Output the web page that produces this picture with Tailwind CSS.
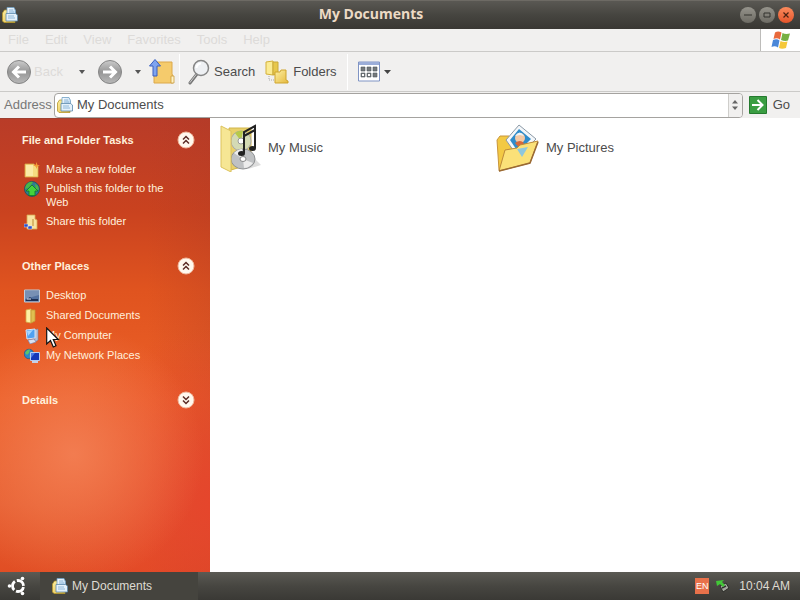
<!DOCTYPE html>
<html lang="en">
<head>
    <meta charset="UTF-8">
    <meta name="viewport" content="width=device-width, initial-scale=1.0">
    <title>My Documents</title>
    <script src="https://cdn.jsdelivr.net/npm/@tailwindcss/browser@4"></script>
</head>
<body class="flex flex-col h-screen overflow-hidden bg-white text-[#4c4c4c] text-[13px] leading-4 font-['Liberation_Sans',Arial,sans-serif]">

    <!-- Shared icons -->
    <svg class="absolute size-0" aria-hidden="true">
        <defs>
            <linearGradient id="grey" x1="0" y1="0" x2="0" y2="1"><stop offset="0" stop-color="#cbcbcb"/><stop offset=".5" stop-color="#979797"/><stop offset="1" stop-color="#b8b8b8"/></linearGradient>
            <linearGradient id="gold" x1="0" y1="0" x2="1" y2="1"><stop offset="0" stop-color="#fdf0a4"/><stop offset="1" stop-color="#e5b93e"/></linearGradient>
            <linearGradient id="page" x1="0" y1="0" x2="1" y2="1"><stop offset="0" stop-color="#ffffff"/><stop offset="1" stop-color="#a9cdec"/></linearGradient>
        </defs>
        <symbol id="docs" viewBox="0 0 16 16">
            <path d="M.500 6l2-3H6v10l7 1v1.500H2L.500 14z" fill="url(#gold)" stroke="#b8992c" stroke-width=".8"/>
            <path d="M5 .500h7l1.500 3V10H5z" fill="url(#page)" stroke="#6f9fc4" stroke-width=".8"/>
            <path d="M4 6.500h9.500l2 1.500v6H4z" fill="#e4f1fb" stroke="#5b88ab" stroke-width=".8"/>
            <path d="M7 3h4M7 5h5M6 9h6M6 11h7" stroke="#78abd2" stroke-width=".8"/>
        </symbol>
        <symbol id="chevrons" viewBox="0 0 18 18">
            <circle cx="9" cy="9" r="8" fill="#fff8ee" stroke="#f0b69a"/>
            <path d="M6 8.500l3-3 3 3M6 12.500l3-3 3 3" fill="none" stroke="#5a2a24" stroke-width="1.500"/>
        </symbol>
    </svg>

    <!-- Title bar -->
    <header class="flex shrink-0 items-center h-[29px] px-0.5 bg-linear-to-b from-[#5a5853] via-[#464540] to-[#393733] border-t border-[#6d6a64]">
        <svg class="size-4"><use href="#docs"/></svg>
        <h1 class="flex-1 pr-4 pb-0.5 text-center text-sm font-bold text-[#ecdac5] font-['Open_Sans',sans-serif]">My Documents</h1>
        <div class="flex gap-[3px] pr-1">
            <button type="button" aria-label="Minimize" class="size-4 rounded-full bg-linear-to-b from-[#96948c] to-[#6d6b64]">
                <svg viewBox="0 0 16 16"><path d="M4 8h8" stroke="#33322e"/></svg>
            </button>
            <button type="button" aria-label="Maximize" class="size-4 rounded-full bg-linear-to-b from-[#96948c] to-[#6d6b64]">
                <svg viewBox="0 0 16 16"><path d="M5 6h6v4H5z" fill="none" stroke="#33322e"/></svg>
            </button>
            <button type="button" aria-label="Close" class="size-4 rounded-full bg-linear-to-b from-[#fa8a5c] to-[#e5542a]">
                <svg viewBox="0 0 16 16"><path d="M5.500 5.500l5 5m0-5l-5 5" stroke="#4a2212" stroke-width="1.200"/></svg>
            </button>
        </div>
    </header>

    <!-- Menu bar -->
    <nav class="flex shrink-0 h-[23px] bg-[#f1f0ef] border-b border-[#cbcac8] text-[#dddbd9]">
        <div class="flex flex-1 items-center gap-4 pl-2">
            <button type="button">File</button>
            <button type="button">Edit</button>
            <button type="button">View</button>
            <button type="button">Favorites</button>
            <button type="button">Tools</button>
            <button type="button">Help</button>
        </div>
        <div class="flex w-10 items-center justify-center bg-white border-l border-[#bdbcba]">
            <svg class="w-5 h-[18px]" viewBox="0 0 20 18">
                <path d="M4 1.500q3-2 6.500 0L9 8.500q-3-2-6.500-.5z" fill="#e8693c"/>
                <path d="M11.500 2q3 1.500 7.500.5l-2 7q-3 1-7-.5z" fill="#76b043"/>
                <path d="M2 9q4-1.500 6.500.5L7 16.500q-3-2-6.500-.5z" fill="#4a87d8"/>
                <path d="M9.500 10q3.500 1.500 7 .5l-1.500 6.500q-4 1.500-7 0z" fill="#f5c83a"/>
            </svg>
        </div>
    </nav>

    <!-- Toolbar -->
    <div class="flex shrink-0 items-center h-10 px-1.5 bg-[#f1f0ef] border-b border-[#cbcac8]">
        <button type="button" class="flex items-center gap-0.5 w-[70px] text-[#dddbd9]">
            <svg class="size-[26px] shrink-0" viewBox="0 0 26 26">
                <circle cx="13" cy="13" r="11.500" fill="url(#grey)" stroke="#858585"/>
                <path d="M20 13H8m5-5.500L7.500 13l5.500 5.500" fill="none" stroke="#fff" stroke-width="3"/>
            </svg>
            Back
        </button>
        <button type="button" aria-label="Back history" class="w-[21px]"><svg class="h-1 w-1.5 ml-[3px]" viewBox="0 0 6 4"><path d="M0 0h6L3 4z" fill="#555"/></svg></button>
        <button type="button" aria-label="Forward">
            <svg class="size-[26px]" viewBox="0 0 26 26">
                <circle cx="13" cy="13" r="11.500" fill="url(#grey)" stroke="#858585"/>
                <path d="M6 13h12m-5-5.500l5.500 5.500-5.500 5.500" fill="none" stroke="#fff" stroke-width="3"/>
            </svg>
        </button>
        <button type="button" aria-label="Forward history" class="w-6"><svg class="h-1 w-1.5 ml-3" viewBox="0 0 6 4"><path d="M0 0h6L3 4z" fill="#555"/></svg></button>
        <button type="button" aria-label="Up">
            <svg class="h-[26px] w-7" viewBox="0 0 28 26">
                <path d="M7 3h18v12l1 2v7H7z" fill="#f5cb6c" stroke="#dca84a"/>
                <path d="M24 17h3v7h-3z" fill="#fff3c4" stroke="#c99a3c" stroke-width=".8"/>
                <path d="M8 .500L13.500 7H10v10H6V7H2.500z" fill="#7fa4f0" stroke="#3a5fc0"/>
            </svg>
        </button>
        <div class="h-9 w-px ml-1 mr-2 bg-[#dcdbd9] border-r border-white"></div>
        <button type="button" class="flex items-center gap-1">
            <svg class="h-[26px] w-[22px]" viewBox="0 0 22 26">
                <path d="M9 15L2 24" stroke="#777" stroke-width="3" stroke-linecap="round"/>
                <path d="M8.500 15L2 23.500" stroke="#ccc" stroke-linecap="round"/>
                <circle cx="13" cy="9" r="7.500" fill="#eef0f3" stroke="#858585" stroke-width="1.500"/>
                <path d="M8.500 9a4.500 4.500 0 0 1 4.500-4.500" fill="none" stroke="#fff" stroke-width="2"/>
            </svg>
            Search
        </button>
        <button type="button" class="flex items-center gap-1 ml-2.5">
            <svg class="size-6" viewBox="0 0 24 24">
                <path d="M1 2l7-1v14l-7-1z" fill="#fbeb94" stroke="#d4b13a"/>
                <path d="M8 2h5v12l-5 1z" fill="#e7c74c" stroke="#c9a83a"/>
                <path d="M4 16v4h5" fill="none" stroke="#aaa" stroke-dasharray="1 1"/>
                <path d="M10 12h5l1-2h5v10l2 1v2H10z" fill="url(#gold)" stroke="#cfa52f"/>
            </svg>
            Folders
        </button>
        <div class="h-9 w-px mx-2.5 bg-[#dcdbd9] border-r border-white"></div>
        <button type="button" aria-label="Views" class="flex items-center gap-1">
            <svg class="h-[21px] w-[22px]" viewBox="0 0 22 21">
                <path d="M.500 1h21v19H.500z" fill="#fff" stroke="#8094c4"/>
                <path d="M1 1h20v3H1z" fill="#9badd8"/>
                <path d="M3 6h4v4H3zM9 6h4v4H9zM15 6h4v4h-4zM3 12h4v4H3zM9 12h4v4H9zM15 12h4v4h-4z" fill="#75797c" stroke="#4e5860" stroke-width=".6"/>
                <path d="M4 13h2v2H4zM10 13h2v2h-2z" fill="#fff"/>
            </svg>
            <svg class="h-1 w-[7px]" viewBox="0 0 7 4"><path d="M0 0h7L3.500 4z" fill="#444"/></svg>
        </button>
    </div>

    <!-- Address bar -->
    <div class="flex shrink-0 items-center h-[26px] pl-1 bg-[#f1f0ef]">
        <label for="address" class="w-[50px] text-[#777]">Address</label>
        <div class="flex flex-1 h-[25px] items-center bg-white border border-[#a5a3a0] rounded-sm overflow-hidden">
            <svg class="size-4 ml-0.5 shrink-0"><use href="#docs"/></svg>
            <input id="address" type="text" value="My Documents" class="flex-1 min-w-0 pl-1 outline-none">
            <button type="button" aria-label="Show addresses" class="flex h-full w-3.5 items-center justify-center bg-[#f1f0ef] border-l border-[#cfcecb]">
                <svg class="h-2.5 w-1.5" viewBox="0 0 6 10"><path d="M0 3.500h6L3 0zM0 6.500h6L3 10z" fill="#666"/></svg>
            </button>
        </div>
        <button type="button" class="flex items-center gap-1.5 pl-1.5 pr-2.5">
            <svg class="size-[18px]" viewBox="0 0 18 18">
                <path d="M.500.500h17v17H.500z" fill="#3a9d42" stroke="#257a2e"/>
                <path d="M3 9h10M8.500 4l5 5-5 5" fill="none" stroke="#fff" stroke-width="2"/>
            </svg>
            Go
        </button>
    </div>

    <div class="flex flex-1 min-h-0">
        <!-- Task pane -->
        <aside class="relative w-[210px] shrink-0 pt-[11px] pl-[22px] pr-[15px] text-[11px] leading-3.5 text-[#fff0dc] border-t border-[#9e3f30] bg-[radial-gradient(circle_at_35%_74%,#f27c50_0%,#f27c5000_36%),radial-gradient(circle_at_105%_85%,#e6452c_0%,#e6452c00_40%),linear-gradient(to_left,#a8382838_0%,#a8382800_30%),linear-gradient(to_bottom,#b93c28_0%,#c9421f_20%,#e0541f_38%,#ec6028_62%,#e55c2e_85%,#e14e24_100%)]">
            <section>
                <div class="flex items-center justify-between h-5">
                    <h2 class="font-bold">File and Folder Tasks</h2>
                    <button type="button" aria-label="Collapse File and Folder Tasks"><svg class="size-[18px]"><use href="#chevrons"/></svg></button>
                </div>
                <ul class="flex flex-col gap-[5px] mt-3 pl-0.5">
                    <li><a href="#" class="flex h-3.5 gap-1.5">
                        <svg class="size-4 shrink-0" viewBox="0 0 16 16">
                            <path d="M1 2h9l1 2h3v11H1z" fill="#f6dc80" stroke="#d9a848" stroke-width=".8"/>
                            <path d="M2 3h7v11H2z" fill="#fbeaa6"/>
                            <path d="M12.500 0l.8 2.700L16 3.500l-2.700.8-.8 2.700-.8-2.700L9 3.500l2.700-.8z" fill="#f49b35"/>
                        </svg>
                        Make a new folder</a></li>
                    <li><a href="#" class="flex h-7 gap-1.5">
                        <svg class="size-4 shrink-0" viewBox="0 0 16 16">
                            <circle cx="8" cy="8" r="7.500" fill="#2f7d8f" stroke="#1f4e5c" stroke-width=".8"/>
                            <path d="M2 4q3-4 7-3l-2 3-3 3-3 1zM11 3l3 2 1 4-3-1z" fill="#48b848"/>
                            <path d="M8 4l6 6h-3v4.500H5V10H2z" fill="#45d23c" stroke="#137a1c" stroke-width=".8"/>
                        </svg>
                        <span class="w-[125px]">Publish this folder to the Web</span></a></li>
                    <li><a href="#" class="flex h-3.5 gap-1.5">
                        <svg class="size-4 shrink-0" viewBox="0 0 16 16">
                            <path d="M3 1h8v4l2 1v9H3z" fill="#f8e2a0" stroke="#d8a850" stroke-width=".8"/>
                            <path d="M9 5v7" stroke="#b98a34"/>
                            <path d="M0 10h4v3H0zM4 12h4v3H4z" fill="#2c4fc4" stroke="#dbe4ff" stroke-width=".5"/>
                        </svg>
                        Share this folder</a></li>
                </ul>
            </section>

            <section class="mt-7">
                <div class="flex items-center justify-between h-5">
                    <h2 class="font-bold">Other Places</h2>
                    <button type="button" aria-label="Collapse Other Places"><svg class="size-[18px]"><use href="#chevrons"/></svg></button>
                </div>
                <ul class="flex flex-col gap-1.5 mt-3 pl-0.5">
                    <li><a href="#" class="flex h-3.5 gap-1.5">
                        <svg class="size-4 shrink-0" viewBox="0 0 16 16">
                            <path d="M.500 2h15v12H.500z" fill="#53719f" stroke="#c3ccd8"/>
                            <path d="M1 3h14v4L1 11z" fill="#7890b4"/>
                            <path d="M2 12l4-3 2 2h6v2H2z" fill="#1c2f54"/>
                            <path d="M3 11h4" stroke="#e6eefa"/>
                        </svg>
                        Desktop</a></li>
                    <li><a href="#" class="flex h-3.5 gap-1.5">
                        <svg class="size-4 shrink-0" viewBox="0 0 16 16">
                            <path d="M2 2l5-1v14l-5-1z" fill="#fdf0a4" stroke="#d5ad48" stroke-width=".8"/>
                            <path d="M7 2h4v11l-4 2z" fill="#e0be50" stroke="#c49a35" stroke-width=".8"/>
                        </svg>
                        Shared Documents</a></li>
                    <li><a href="#" class="flex h-3.5 gap-1.5">
                        <svg class="size-4 shrink-0" viewBox="0 0 16 16">
                            <path d="M10 2l4-1v11l-3 2z" fill="#b9c3d8" stroke="#7784a4" stroke-width=".6"/>
                            <path d="M2 2l9-1v9l-8 1z" fill="#4fa1f2" stroke="#d6e5f8"/>
                            <path d="M3 3l6-1-5 6z" fill="#a4d5ff"/>
                            <path d="M4 12l6-1 2 3-6 2z" fill="#d9e2f1" stroke="#7184b5" stroke-width=".6"/>
                        </svg>
                        My Computer</a></li>
                    <li><a href="#" class="flex h-3.5 gap-1.5">
                        <svg class="size-4 shrink-0" viewBox="0 0 16 16">
                            <circle cx="5" cy="6" r="4.800" fill="#2c87c8" stroke="#174f80" stroke-width=".6"/>
                            <path d="M1 5q2-4 5-3.500L5 5 3 7zM5 8l3-2v4z" fill="#5cc46a"/>
                            <path d="M6.500 4.500h9v8h-9z" fill="#1637b8" stroke="#b8cdf2"/>
                            <path d="M7 5h4l-4 5z" fill="#4877e6"/>
                            <path d="M8 13h6v2H8z" fill="#c6d0e6"/>
                        </svg>
                        My Network Places</a></li>
                </ul>
            </section>

            <section class="mt-7">
                <div class="flex items-center justify-between h-5">
                    <h2 class="font-bold">Details</h2>
                    <button type="button" aria-label="Expand Details"><svg class="size-[18px] rotate-180"><use href="#chevrons"/></svg></button>
                </div>
            </section>

            <!-- Mouse pointer -->
            <svg class="absolute left-[46px] top-[208px] h-[22px] w-3.5" viewBox="0 0 14 22">
                <path d="M.700 1v16l3.800-3.500L7.300 20l2.700-1.200L7.300 12.500h5z" fill="#fff" stroke="#111" stroke-width="1.200"/>
            </svg>
        </aside>

        <!-- Folder contents -->
        <main class="grid flex-1 grid-cols-[278px_1fr] content-start items-center pl-2 pt-1.5 bg-white">
            <a href="#" class="flex items-center gap-1.5">
                <svg class="h-12 w-11" viewBox="0 0 44 48">
                    <path d="M30 45l13-4-6-6z" fill="#ddd"/>
                    <path d="M11 4h22v36l-20 6z" fill="#e9d16a" stroke="#d2b64a"/>
                    <circle cx="23" cy="17" r="10" fill="#d4dab4" stroke="#aaa"/>
                    <path d="M23 17l-6-8a10 10 0 0 1 8-2z" fill="#b6c94a"/>
                    <circle cx="23" cy="17" r="3" fill="#fff" stroke="#999"/>
                    <ellipse cx="25" cy="35" rx="12" ry="10" fill="#bfc1c3" stroke="#8f9193"/>
                    <path d="M25 35l-9-6q4-4 8-4zM25 35l10 4q-4 5-9 5z" fill="#ececec"/>
                    <ellipse cx="25" cy="35" rx="3" ry="2.500" fill="#fff" stroke="#888"/>
                    <path d="M3 2l10 5v41L3 43z" fill="#f6e694" stroke="#dcc25c"/>
                    <path d="M26 29V8l11-6v22M26 12l11-6" fill="none" stroke="#222" stroke-width="2"/>
                    <ellipse cx="23.500" cy="29.500" rx="3.500" ry="2.500" fill="#222"/>
                    <ellipse cx="34.500" cy="24.500" rx="3.500" ry="2.500" fill="#222"/>
                </svg>
                My Music
            </a>
            <a href="#" class="flex items-center gap-1.5">
                <svg class="h-12 w-11" viewBox="0 0 44 48">
                    <path d="M1 16l3-4h9l3 3 14-2v24L3 46z" fill="#f3c943" stroke="#c9963c"/>
                    <path d="M23 1l17 14-18 18L10 16z" fill="#f4f7fa" stroke="#8b99a6"/>
                    <path d="M23 5l12 10-13 13-8-12z" fill="#2f8ccb"/>
                    <circle cx="24" cy="14" r="5" fill="#f3c9a6"/>
                    <path d="M19 12q5-7 9 0l-4-1z" fill="#eef3f5"/>
                    <path d="M19 19q5-4 9 0l-4 6z" fill="#d6683c"/>
                    <path d="M9 26l12-2 3-3 18-4-8 22L3 47z" fill="#fbe178" stroke="#bd8a3a"/>
                    <path d="M21 25l11-2-6 10z" fill="#8ec7de"/>
                    <path d="M3 47l31-8 8-21" fill="none" stroke="#9a6a34" stroke-width="1.500"/>
                </svg>
                My Pictures
            </a>
        </main>
    </div>

    <!-- Taskbar -->
    <footer class="flex shrink-0 items-center h-7 bg-linear-to-b from-[#5b5a54] via-[#474641] to-[#3a3935] text-[#dfdbd2] text-xs">
        <button type="button" aria-label="Start menu" class="flex w-10 pl-[7px]">
            <svg class="size-5" viewBox="0 0 20 20">
                <circle cx="11" cy="10" r="5.500" fill="none" stroke="#fff" stroke-width="2.800" stroke-dasharray="9.500 2.020" stroke-dashoffset="-1"/>
                <circle cx="2.500" cy="10" r="1.800" fill="#fff"/>
                <circle cx="15.500" cy="2.500" r="1.800" fill="#fff"/>
                <circle cx="15.500" cy="17.500" r="1.800" fill="#fff"/>
            </svg>
        </button>
        <button type="button" class="flex h-full w-[158px] items-center gap-1 pl-3 bg-[#45443e]">
            <svg class="size-4"><use href="#docs"/></svg>
            My Documents
        </button>
        <div class="flex flex-1 h-full items-center justify-end pr-2.5">
            <button type="button" class="h-4 w-3.5 bg-[#e8714a] text-center text-[9px] text-white">EN</button>
            <svg class="size-4 ml-1.5" viewBox="0 0 16 16">
                <path d="M5 8l6-3 3 5-6 4z" fill="#a5a8a0" stroke="#2c2c28"/>
                <path d="M7 10l4-2" stroke="#333" stroke-width="1.500"/>
                <path d="M1 3l8-1-2 2 3 3-2 2-3-3-3 2z" fill="#42c737"/>
            </svg>
            <time class="ml-2">10:04 AM</time>
        </div>
    </footer>
</body>
</html>
